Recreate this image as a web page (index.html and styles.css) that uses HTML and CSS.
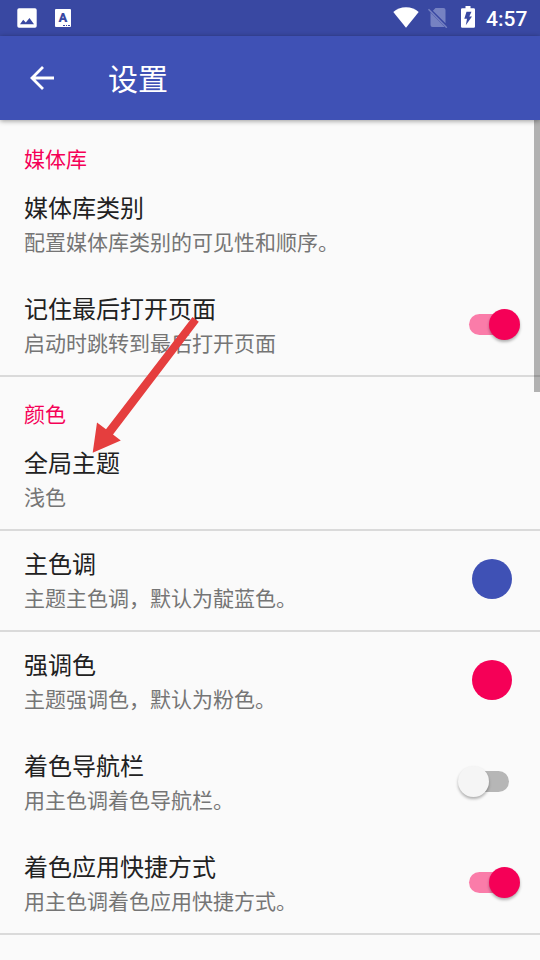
FILE: index.html
```
<!DOCTYPE html>
<html lang="zh-CN">
<head>
<meta charset="utf-8">
<title>设置</title>
<link rel="stylesheet" href="styles.css">
</head>
<body>
<div class="screen">
  <header class="statusbar">
    <svg class="ic-picture" viewBox="0 0 20 20"><path fill="#fff" fill-rule="evenodd" d="M2 0.300h16a1.700 1.700 0 0 1 1.700 1.700v16a1.700 1.700 0 0 1-1.700 1.700H2A1.700 1.700 0 0 1 .3 18V2A1.700 1.700 0 0 1 2 .3zM3 16.300h14l-4.500-6.300-3.700 4.400-2.600-2.700z"/></svg>
    <span class="ic-letter">A<i></i></span>
    <span class="spacer"></span>
    <svg class="ic-wifi" viewBox="0 0 26 21"><path fill="#fff" d="M13 20.800.3 5C3.500 2.300 8 .3 13 .3S22.500 2.300 25.700 5z"/></svg>
    <svg class="ic-sim" viewBox="0 0 20 20"><path fill="#7682c2" d="M7.500 0H15.500a2 2 0 0 1 2 2v13.300L4.900 2.700zM2.500 4.600 16.500 18.800a2 2 0 0 1-1 .2H4.500a2 2 0 0 1-2-2z"/><path stroke="#7682c2" stroke-width="1.500" d="M.5 1.300 18.800 19.700"/></svg>
    <svg class="ic-battery" viewBox="0 0 14 22"><path fill="#fff" fill-rule="evenodd" d="M4.500 0h5v2.200h3.200q1.300 0 1.300 1.300v17q0 1.300-1.300 1.300H1.300Q0 21.800 0 20.500v-17q0-1.300 1.300-1.300h3.200zM5.500 5.700 3.300 12.700H6L4.800 19.300 11 10.500H8.300L10.500 5.700z"/></svg>
    <span class="clock">4:57</span>
  </header>
  <div class="toolbar">
    <svg class="ic-back" viewBox="0 0 24 24"><path fill="none" stroke="#fff" stroke-width="2.800" d="M24 12H2M13 1 2 12l11 11"/></svg>
    <h1>设置</h1>
  </div>
  <main class="list">
    <h2 class="category">媒体库</h2>
    <div class="row"><div class="text"><div class="title">媒体库类别</div><div class="summary">配置媒体库类别的可见性和顺序。</div></div></div>
    <div class="row"><div class="text"><div class="title">记住最后打开页面</div><div class="summary">启动时跳转到最后打开页面</div></div><div class="switch on"><span></span></div></div>
    <h2 class="category ruled">颜色</h2>
    <div class="row"><div class="text"><div class="title">全局主题</div><div class="summary">浅色</div></div></div>
    <div class="row ruled"><div class="text"><div class="title">主色调</div><div class="summary">主题主色调，默认为靛蓝色。</div></div><div class="swatch indigo"></div></div>
    <div class="row ruled"><div class="text"><div class="title">强调色</div><div class="summary">主题强调色，默认为粉色。</div></div><div class="swatch pink"></div></div>
    <div class="row"><div class="text"><div class="title">着色导航栏</div><div class="summary">用主色调着色导航栏。</div></div><div class="switch off"><span></span></div></div>
    <div class="row"><div class="text"><div class="title">着色应用快捷方式</div><div class="summary">用主色调着色应用快捷方式。</div></div><div class="switch on"><span></span></div></div>
    <div class="ruled tail"></div>
    <div class="scrollbar"></div>
  </main>
  <svg class="arrow" viewBox="0 0 110 140"><path fill="#e53e3e" d="M102.500 1 108.800 5.800 23 118.500 30.800 124.500 2.700 136.800 7 106.500 16 113.300z"/></svg>
</div>
</body>
</html>
```
FILE: styles.css
```
* { box-sizing: border-box; }
body {
  margin: 0;
  background: #fafafa;
  font-family: "Noto Sans CJK SC", sans-serif;
}
.screen {
  position: relative;
  width: 540px;
  height: 960px;
  overflow: hidden;
  display: flex;
  flex-direction: column;
}
.statusbar {
  height: 36px;
  flex: none;
  display: flex;
  align-items: center;
  padding: 0 12px 0 17px;
  background: #3948a2;
  color: #fff;
}
.spacer { flex: 1; }
.ic-picture { width: 20px; height: 20px; }
.ic-letter {
  position: relative;
  width: 16px;
  height: 18px;
  margin-left: 18px;
  border-radius: 1px;
  background: #fff;
  color: #3948a2;
  font: 900 13px/17px Roboto, sans-serif;
  text-align: center;
}
.ic-letter i {
  position: absolute;
  right: 1px;
  bottom: 1px;
  width: 7px;
  height: 1.5px;
  background: repeating-linear-gradient(90deg, #3948a2 0 1.6px, #fff 1.6px 2.6px);
}
.ic-wifi { width: 26px; height: 21px; margin: 0 9px 2px 0; }
.ic-sim { width: 20px; height: 20px; margin-right: 13px; }
.ic-battery { width: 14px; height: 22px; margin: 0 11px 2px 0; }
.clock {
  width: 42px;
  padding-top: 2px;
  font: 500 21px/36px Roboto, sans-serif;
  white-space: nowrap;
}
.toolbar {
  position: relative;
  z-index: 2;
  height: 84px;
  flex: none;
  display: flex;
  align-items: center;
  padding-left: 30px;
  background: #3f51b5;
  color: #fff;
  box-shadow: 0 1px 5px rgba(0, 0, 0, .4);
}
.ic-back { width: 24px; height: 24px; margin-right: 54px; }
h1 { margin: 0 0 3px; font-size: 30px; line-height: 44px; font-weight: 400; }
.list { position: relative; flex: 1; }
.category {
  height: 53px;
  margin: 0;
  padding: 23px 24px 0;
  color: #f50057;
  font-size: 21px;
  line-height: 30px;
  font-weight: 400;
}
.row {
  height: 101px;
  display: flex;
  align-items: center;
  justify-content: space-between;
  padding: 0 28px 0 24px;
}
.ruled { box-shadow: inset 0 2px #dadada; }
.tail { height: 27px; }
.title { font-size: 24px; line-height: 36px; color: #212121; }
.summary { font-size: 21px; line-height: 32px; color: #757575; }
.text { padding-bottom: 1px; }
.swatch { width: 40px; height: 40px; margin-bottom: 1px; border-radius: 50%; }
.indigo { background: #3f51b5; }
.pink { background: #f50057; }
.switch {
  position: relative;
  width: 40px;
  height: 21px;
  margin-right: 3px;
  border-radius: 11px;
}
.switch.on { background: #fa7ca9; }
.switch.off { background: #b6b6b6; }
.switch span {
  position: absolute;
  top: -5px;
  width: 31px;
  height: 31px;
  border-radius: 50%;
  box-shadow: 0 2px 3px rgba(0, 0, 0, .3);
}
.on span { right: -11px; background: #f50057; }
.off span { left: -11px; background: #f5f5f5; }
.scrollbar {
  position: absolute;
  top: 0;
  right: 0;
  width: 6px;
  height: 272px;
  background: rgba(0, 0, 0, .29);
}
.arrow {
  position: absolute;
  left: 90px;
  top: 316px;
  width: 110px;
  height: 140px;
}
```
